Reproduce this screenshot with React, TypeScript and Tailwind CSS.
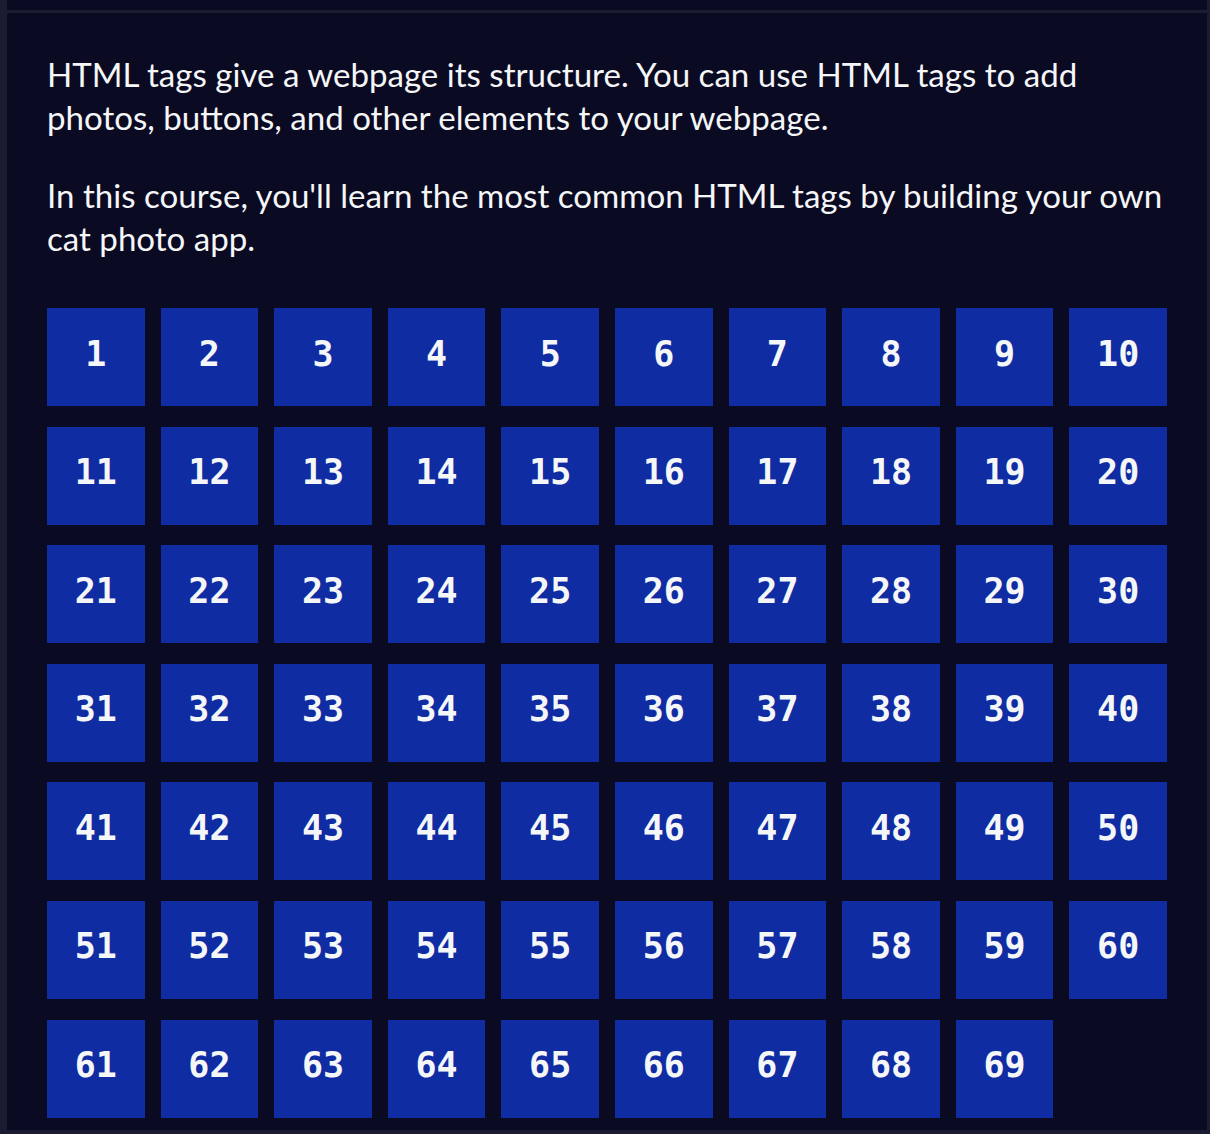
const tiles = Array.from({ length: 69 }, (_, i) => i + 1);

export default function App() {
  return (
    <div className="h-[1134px] bg-[#1b1b32] pl-[7px] pr-[3px] pb-[4px] overflow-hidden">
      <div className="h-full flex flex-col bg-[#0a0a23]">
        <div className="h-[10px] shrink-0" />
        <div className="h-[3px] shrink-0 bg-[#1b1b32]" />
        <div className="flex-1 px-[40px] pt-[40px] font-['Lato',sans-serif] text-[33.1px] leading-[43px] text-[#f5f6f7]">
          <p>
            HTML tags give a webpage its structure. You can use HTML tags to add photos, buttons, and other elements to
            your webpage.
          </p>
          <p className="mt-[35px]">
            In this course, you'll learn the most common HTML tags by building your own cat photo app.
          </p>
          <div className="mt-[48px] grid grid-cols-10 gap-x-[16px] gap-y-[20.6px]">
            {tiles.map((n) => (
              <div
                key={n}
                className="h-[98px] pb-[6px] bg-[#0f2ca3] flex items-center justify-center font-['DejaVu_Sans_Mono',monospace] font-bold text-[35px] text-[#f5f6f7]"
              >
                {n}
              </div>
            ))}
          </div>
        </div>
      </div>
    </div>
  );
}
